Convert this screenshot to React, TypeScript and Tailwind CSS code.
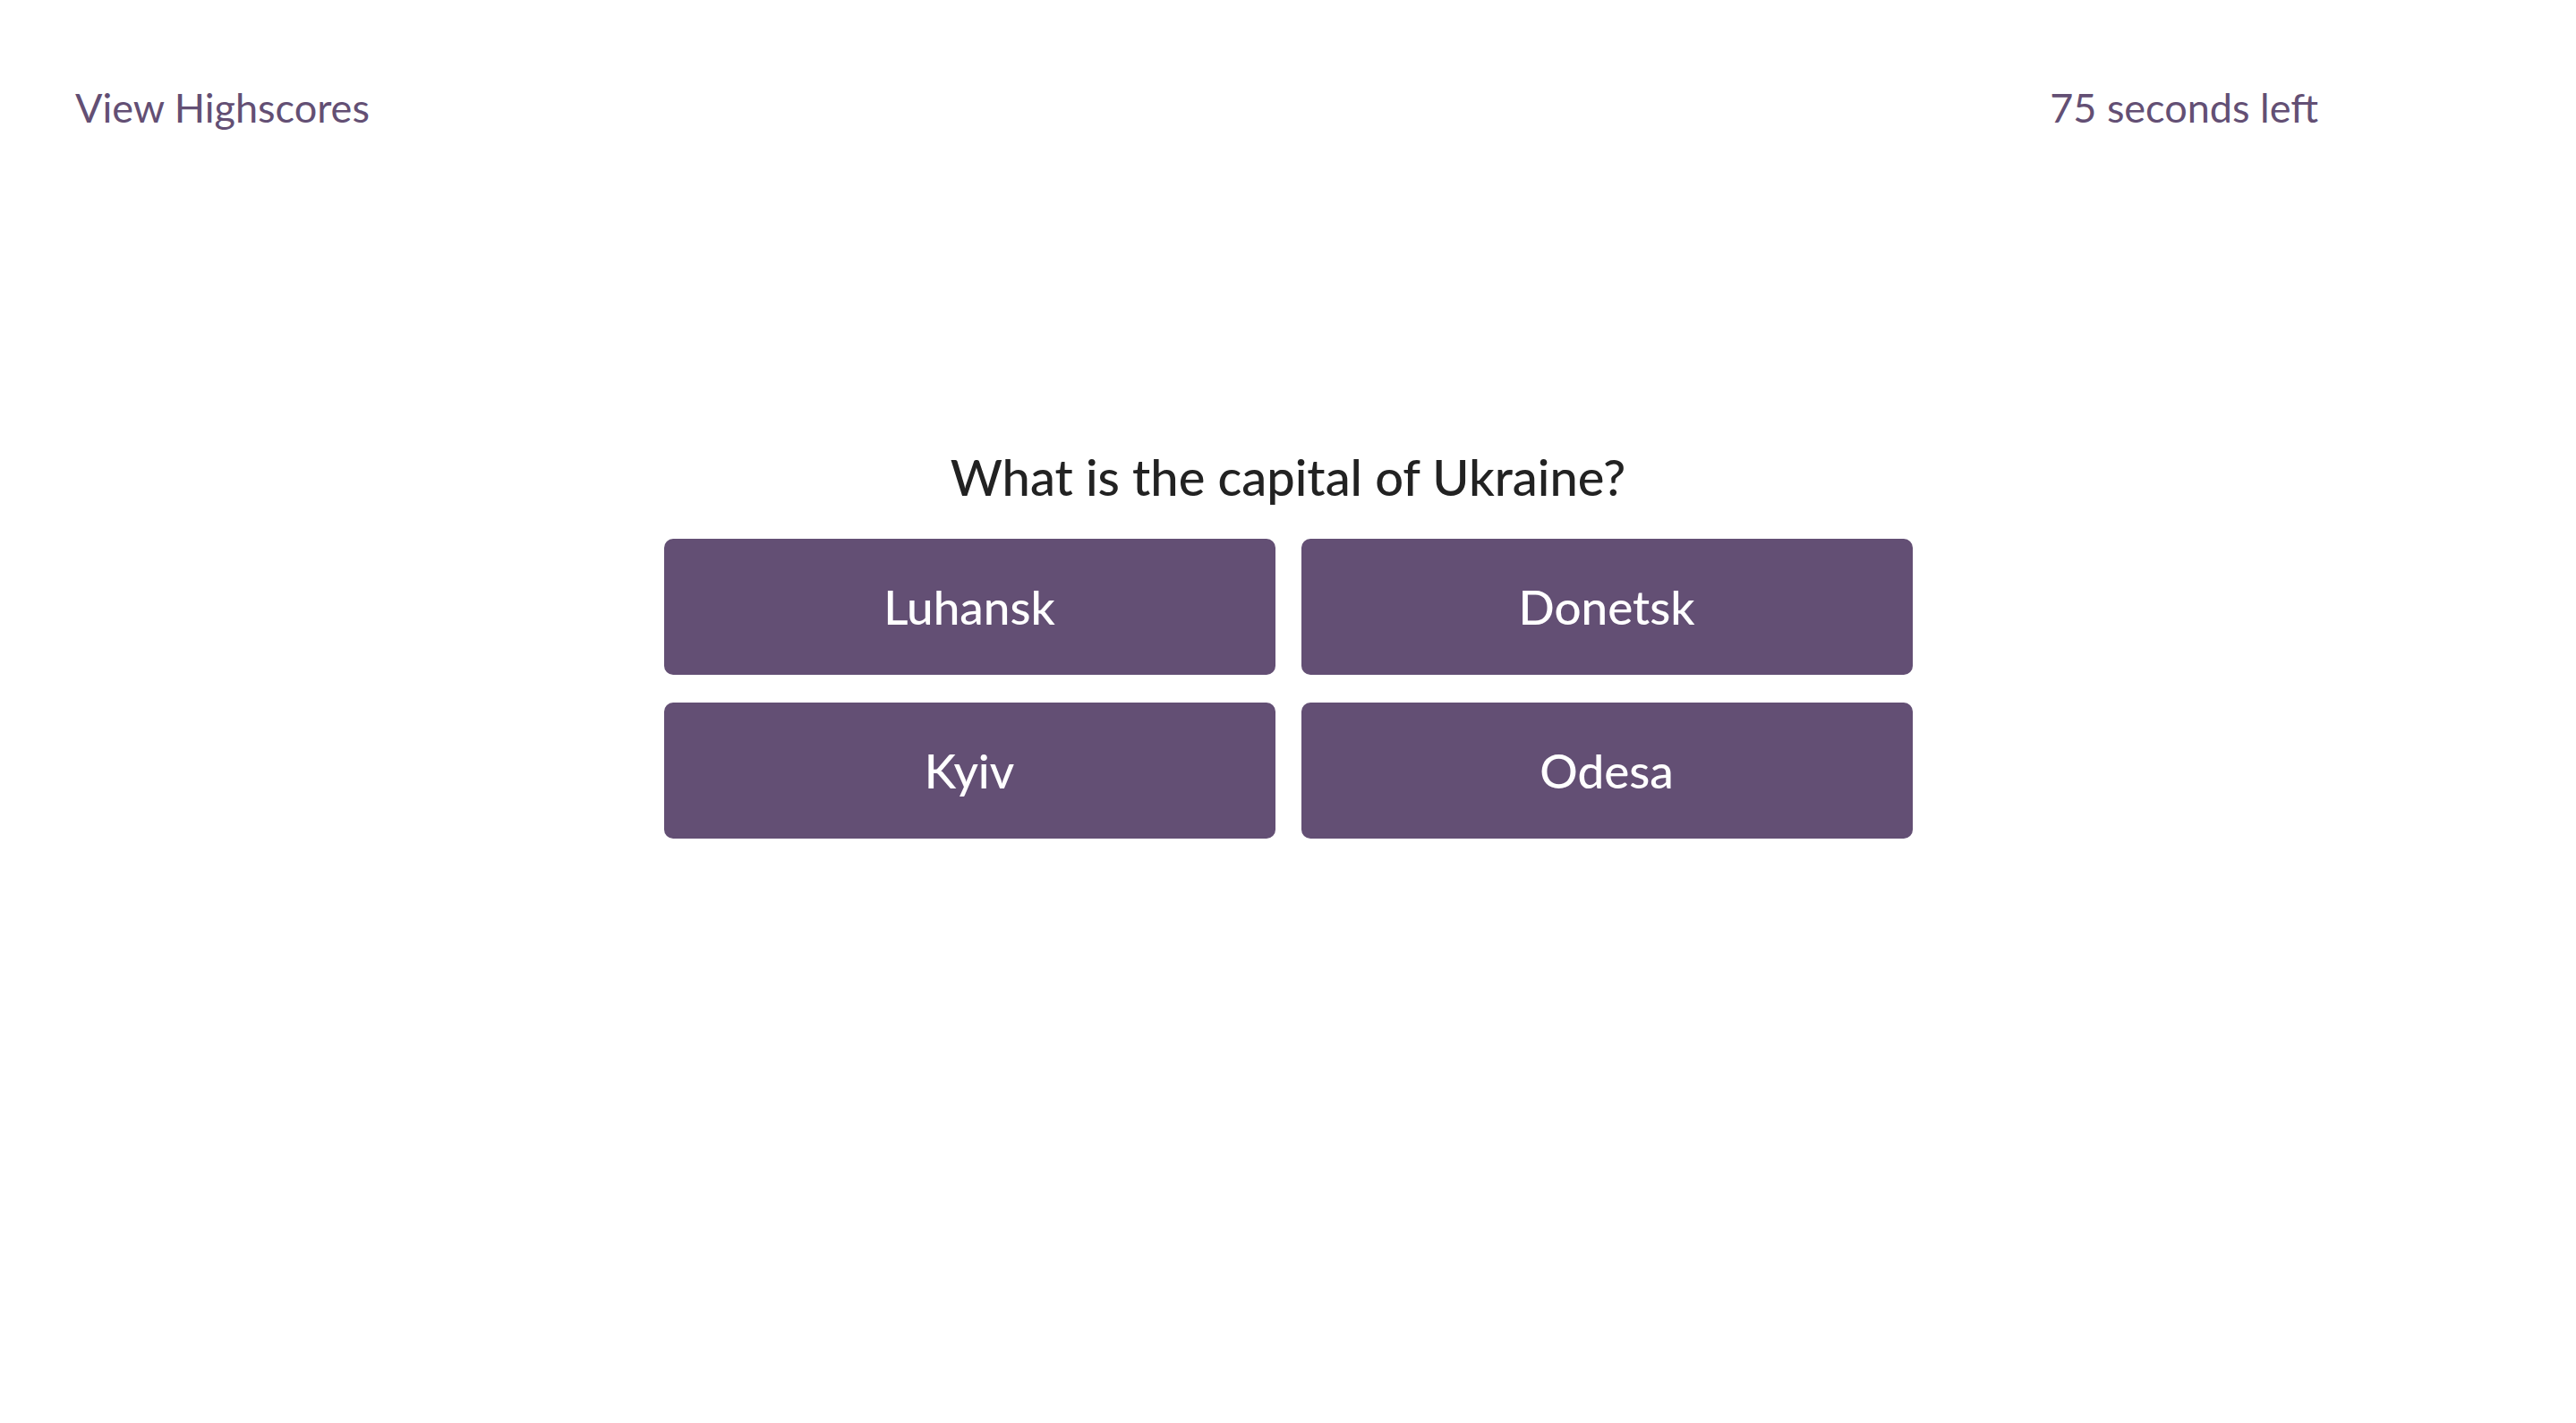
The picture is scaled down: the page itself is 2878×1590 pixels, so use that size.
const answers = ["Luhansk", "Donetsk", "Kyiv", "Odesa"];

export default function App() {
  return (
    <div className="min-h-screen bg-white font-['Lato','Open_Sans',sans-serif]">
      <header className="flex justify-between items-center pl-[84px] pr-[288px] pt-[98px] text-[45px] leading-none text-[#634f74]">
        <a href="#" className="hover:underline">View Highscores</a>
        <span>75 seconds left</span>
      </header>

      <main className="flex flex-col items-center pt-[362px]">
        <h1 className="text-[56px] leading-none text-[#222222] font-medium">
          What is the capital of Ukraine?
        </h1>
        <div className="grid grid-cols-2 gap-x-[29px] gap-y-[31px] w-[1395px] mt-[41px]">
          {answers.map((a) => (
            <button
              key={a}
              className="h-[152px] rounded-[10px] bg-[#634f74] text-white text-[53px] font-medium"
            >
              {a}
            </button>
          ))}
        </div>
      </main>
    </div>
  );
}
